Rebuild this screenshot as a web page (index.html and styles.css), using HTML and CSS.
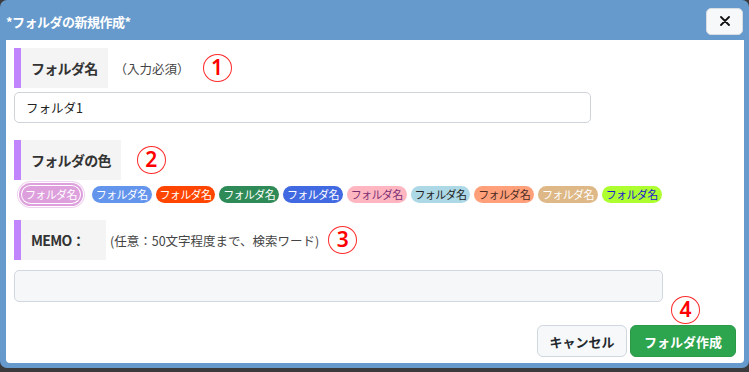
FILE: index.html
```html
<!DOCTYPE html>
<html lang="ja">
<head>
  <meta charset="UTF-8" />
  <meta name="viewport" content="width=device-width, initial-scale=1.0"/>
  <title>フォルダの新規作成</title>
  <link rel="stylesheet" href="styles.css">
</head>
<body>
  <div class="dialog">
    <header class="dialog-header">
      <span class="dialog-title">*フォルダの新規作成*</span>
      <button class="close-btn" type="button" aria-label="閉じる">
        <svg width="10" height="10" viewBox="0 0 10 10">
          <path d="M1 1 L9 9 M9 1 L1 9" stroke="#111" stroke-width="1.8" stroke-linecap="round"/>
        </svg>
      </button>
    </header>

    <section class="dialog-body">
      <div class="field-head">
        <h3 class="field-label">フォルダ名</h3>
        <span class="field-note">（入力必須）</span>
        <span class="num num-1">1</span>
      </div>
      <input class="text-input" type="text" value="フォルダ1" />

      <div class="field-head">
        <h3 class="field-label">フォルダの色</h3>
        <span class="num num-2">2</span>
      </div>
      <div class="color-list">
        <span class="pill pill-plum selected">フォルダ名</span>
        <span class="pill pill-cornflower">フォルダ名</span>
        <span class="pill pill-orangered">フォルダ名</span>
        <span class="pill pill-seagreen">フォルダ名</span>
        <span class="pill pill-royal">フォルダ名</span>
        <span class="pill pill-pink">フォルダ名</span>
        <span class="pill pill-lightblue">フォルダ名</span>
        <span class="pill pill-salmon">フォルダ名</span>
        <span class="pill pill-burly">フォルダ名</span>
        <span class="pill pill-lime">フォルダ名</span>
      </div>

      <div class="field-head">
        <h3 class="field-label">MEMO：</h3>
        <span class="field-note note-memo">(任意：50文字程度まで、検索ワード)</span>
        <span class="num num-3">3</span>
      </div>
      <textarea class="memo"></textarea>

      <div class="dialog-footer">
        <span class="num num-4">4</span>
        <button class="btn btn-cancel" type="button">キャンセル</button>
        <button class="btn btn-create" type="button">フォルダ作成</button>
      </div>
    </section>
  </div>
</body>
</html>
```

FILE: styles.css
```css
* {
  margin: 0;
  padding: 0;
  box-sizing: border-box;
}

body {
  font-family: "Noto Sans CJK JP", "Noto Sans", sans-serif;
  background: #3b3b3d;
  color: #333;
  width: 749px;
  height: 372px;
  overflow: hidden;
}

.dialog {
  width: 749px;
  height: 368px;
  background: #6699cc;
  border-radius: 7px;
  padding: 0 5px 5px 6px;
}

.dialog-header {
  height: 40px;
  display: flex;
  align-items: center;
  justify-content: space-between;
  padding-top: 2px;
}

.dialog-title {
  color: #fff;
  font-size: 13px;
  font-weight: bold;
  letter-spacing: -0.5px;
}

.close-btn {
  width: 37px;
  height: 27px;
  margin-right: 1px;
  background: #f6f8fa;
  border: 1px solid #d8dde3;
  border-radius: 5px;
  display: flex;
  align-items: center;
  justify-content: center;
}

.dialog-body {
  height: 323px;
  background: #fff;
  border-radius: 0 0 4px 4px;
  padding: 8px 8px 0 8px;
}

.field-head {
  display: flex;
  align-items: center;
  height: 40px;
}

.field-label {
  height: 40px;
  min-width: 92px;
  display: flex;
  align-items: center;
  background: #f4f4f4;
  border-left: 7px solid #c084fc;
  padding: 0 10px;
  font-size: 14px;
  font-weight: bold;
  letter-spacing: -0.7px;
  color: #333;
}

.field-note {
  font-size: 12.5px;
  color: #444;
  margin-left: 7px;
}

.note-memo {
  margin-left: 4px;
}

.num {
  width: 29px;
  height: 28px;
  border: 1.5px solid #ff2a2a;
  border-radius: 50%;
  color: #f00;
  font-family: "Noto Sans", sans-serif;
  font-size: 21px;
  font-weight: 600;
  line-height: 25px;
  text-align: center;
  margin-left: 15px;
}

.num-1 {
  margin-left: 13px;
}

.num-2 {
  margin-left: 16px;
}

.num-3 {
  margin-left: 9px;
}

.text-input {
  display: block;
  width: 577px;
  height: 31px;
  margin-top: 4px;
  margin-bottom: 17px;
  padding: 0 11px;
  border: 1px solid #ced4da;
  border-radius: 5px;
  font-family: inherit;
  font-size: 12.5px;
  color: #222;
}

.color-list {
  display: flex;
  gap: 4px;
  margin-top: 6px;
  margin-bottom: 17px;
}

.pill {
  height: 17px;
  line-height: 17px;
  padding: 0 4px;
  border-radius: 9px;
  font-size: 11px;
  letter-spacing: -0.65px;
  color: #fff;
  white-space: nowrap;
}

.pill.selected {
  margin: 0 8px 0 8px;
  padding: 0 3px;
  box-shadow: 0 0 0 1px #fff, 0 0 0 3px #dda0dd, 0 0 0 4px #fff, 0 0 0 5px #efd2ef;
}

.pill-plum { background: #dda0dd; }
.pill-cornflower { background: #6495ed; }
.pill-orangered { background: #ff4500; }
.pill-seagreen { background: #2e8b57; }
.pill-royal { background: #4169e1; }
.pill-pink { background: #ffb6c1; color: #7b2f73; }
.pill-lightblue { background: #add8e6; color: #222; }
.pill-salmon { background: #ffa07a; color: #4a2b22; }
.pill-burly { background: #deb887; }
.pill-lime { background: #adff2f; color: #1a1ad0; }

.memo {
  display: block;
  width: 649px;
  height: 32px;
  margin-top: 10px;
  background: #f6f7f9;
  border: 1px solid #d0d7de;
  border-radius: 5px;
  resize: none;
}

.dialog-footer {
  position: relative;
  display: flex;
  justify-content: flex-end;
  gap: 3px;
  margin-top: 23px;
}

.num-4 {
  position: absolute;
  top: -29px;
  right: 36px;
  margin: 0;
}

.btn {
  height: 32px;
  border-radius: 6px;
  font-family: inherit;
  font-size: 13px;
  font-weight: bold;
  cursor: pointer;
}

.btn-cancel {
  width: 90px;
  background: #f6f8fa;
  border: 1px solid #d0d7de;
  color: #24292f;
}

.btn-create {
  width: 106px;
  background: #2da44e;
  border: 1px solid #2a9a49;
  color: #fff;
}
```
